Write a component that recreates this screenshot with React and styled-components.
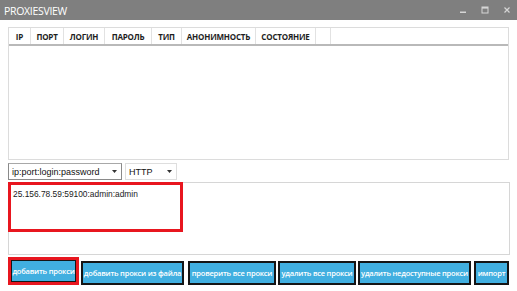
import React from "react";
import styled, { createGlobalStyle } from "styled-components";

const GlobalStyle = createGlobalStyle`
  html, body { margin: 0; padding: 0; background: #ffffff; }
  * { box-sizing: border-box; }
`;

const Window = styled.div`
  width: 517px;
  height: 291px;
  display: flex;
  flex-direction: column;
  background: #ffffff;
  font-family: "Open Sans", "Noto Sans", sans-serif;
  overflow: hidden;
`;

const TitleBar = styled.div`
  height: 20px;
  background: #7f7f7f;
  display: flex;
  align-items: center;
  padding: 0 6px 0 4px;
`;

const Title = styled.div`
  flex: 1;
  color: #ffffff;
  font-size: 10.5px;
  letter-spacing: -0.3px;
  padding-top: 1px;
`;

const Controls = styled.div`
  display: flex;
  align-items: center;
  gap: 14px;
`;

const ControlIcon = styled.svg`
  width: 8px;
  height: 8px;
  display: block;
`;

const Body = styled.div`
  flex: 1;
  display: flex;
  flex-direction: column;
  padding: 7px 8px 0 8px;
`;

const ListView = styled.div`
  width: 501px;
  height: 133px;
  border: 1px solid #dcdcdc;
  background: #fff;
`;

const HeaderRow = styled.div`
  display: flex;
  height: 18px;
  border-bottom: 2px solid #b9b9b9;
`;

const HeaderCell = styled.div`
  width: ${(p) => p.$w}px;
  border-right: 1px solid #e2e2e2;
  display: flex;
  align-items: center;
  justify-content: center;
  font-size: 8px;
  font-weight: 700;
  color: #1e1e1e;
  letter-spacing: -0.2px;
  white-space: nowrap;
`;

const ComboRow = styled.div`
  display: flex;
  gap: 3px;
  margin-top: 3px;
`;

const Combo = styled.div`
  width: ${(p) => p.$w}px;
  height: 17px;
  border: 1px solid ${(p) => (p.$active ? "#8a8a8a" : "#dedede")};
  border-top-color: ${(p) => (p.$active ? "#a8a8a8" : "#dedede")};
  display: flex;
  align-items: center;
  padding: 0 4px 0 3px;
  font-family: "Liberation Sans", Arial, sans-serif;
  font-size: 9px;
  color: #111;
  background: #fff;
`;

const ComboText = styled.span`
  flex: 1;
  white-space: nowrap;
`;

const Caret = styled.svg`
  width: 5px;
  height: 3px;
  display: block;
`;

const TextBox = styled.div`
  position: relative;
  margin-top: 2px;
  width: 502px;
  height: 73px;
  border: 1px solid #d6d6d6;
  padding: 6px 4px;
  font-family: "Liberation Sans", Arial, sans-serif;
  font-size: 8.4px;
  color: #1a1a1a;
`;

const Highlight = styled.div`
  position: absolute;
  left: -1px;
  top: -1px;
  width: 175px;
  height: 50px;
  border: 3px solid #e8161f;
  pointer-events: none;
`;

const ButtonRow = styled.div`
  display: flex;
  align-items: flex-end;
  margin-top: 2px;
  height: 28px;
`;

const Frame = styled.div`
  border: 3px solid #e8161f;
  width: ${(p) => p.$w}px;
  height: 28px;
  margin-right: ${(p) => p.$mr}px;
  display: flex;
`;

const Button = styled.button`
  width: ${(p) => (p.$w ? `${p.$w}px` : "100%")};
  height: ${(p) => (p.$w ? "24px" : "100%")};
  margin-right: ${(p) => p.$mr || 0}px;
  background: #41afe0;
  border: ${(p) => (p.$thin ? "1px" : "2px")} solid #151515;
  color: #ffffff;
  font-family: "Open Sans", "Noto Sans", sans-serif;
  font-size: 7.5px;
  font-weight: 600;
  letter-spacing: -0.2px;
  padding: 0;
  display: flex;
  align-items: center;
  justify-content: center;
  white-space: nowrap;
  flex-shrink: 0;
`;

const columns = [
  { t: "IP", w: 22 },
  { t: "ПОРТ", w: 33 },
  { t: "ЛОГИН", w: 41 },
  { t: "ПАРОЛЬ", w: 47 },
  { t: "ТИП", w: 30 },
  { t: "АНОНИМНОСТЬ", w: 74 },
  { t: "СОСТОЯНИЕ", w: 60 },
  { t: "", w: 15 },
];

const buttons = [
  { t: "добавить прокси из файла", w: 103, mr: 4 },
  { t: "проверить все прокси", w: 88, mr: 2 },
  { t: "удалить все прокси", w: 78, mr: 2 },
  { t: "удалить недоступные прокси", w: 113, mr: 3 },
  { t: "импорт", w: 35, mr: 0 },
];

function CaretIcon() {
  return (
    <Caret viewBox="0 0 5 3">
      <path d="M0 0 L5 0 L2.5 3 Z" fill="#333" />
    </Caret>
  );
}

export default function App() {
  return (
    <>
      <GlobalStyle />
      <Window>
        <TitleBar>
          <Title>PROXIESVIEW</Title>
          <Controls>
            <ControlIcon viewBox="0 0 8 8">
              <rect x="1" y="5.5" width="6" height="1.5" fill="#d6d6d6" />
            </ControlIcon>
            <ControlIcon viewBox="0 0 8 8">
              <rect x="1" y="1" width="6" height="6" fill="none" stroke="#d6d6d6" strokeWidth="1" />
              <rect x="1" y="1" width="6" height="1.6" fill="#d6d6d6" />
            </ControlIcon>
            <ControlIcon viewBox="0 0 8 8">
              <path d="M1.5 1.5 L6.5 6.5 M6.5 1.5 L1.5 6.5" stroke="#d6d6d6" strokeWidth="1.2" />
            </ControlIcon>
          </Controls>
        </TitleBar>
        <Body>
          <ListView>
            <HeaderRow>
              {columns.map((c, i) => (
                <HeaderCell key={i} $w={c.w}>
                  {c.t}
                </HeaderCell>
              ))}
            </HeaderRow>
          </ListView>
          <ComboRow>
            <Combo $w={114} $active>
              <ComboText>ip:port:login:password</ComboText>
              <CaretIcon />
            </Combo>
            <Combo $w={52}>
              <ComboText>HTTP</ComboText>
              <CaretIcon />
            </Combo>
          </ComboRow>
          <TextBox>
            25.156.78.59:59100:admin:admin
            <Highlight />
          </TextBox>
          <ButtonRow>
            <Frame $w={72} $mr={2}>
              <Button $thin>добавить прокси</Button>
            </Frame>
            {buttons.map((b, i) => (
              <Button key={i} $w={b.w} $mr={b.mr}>
                {b.t}
              </Button>
            ))}
          </ButtonRow>
        </Body>
      </Window>
    </>
  );
}
